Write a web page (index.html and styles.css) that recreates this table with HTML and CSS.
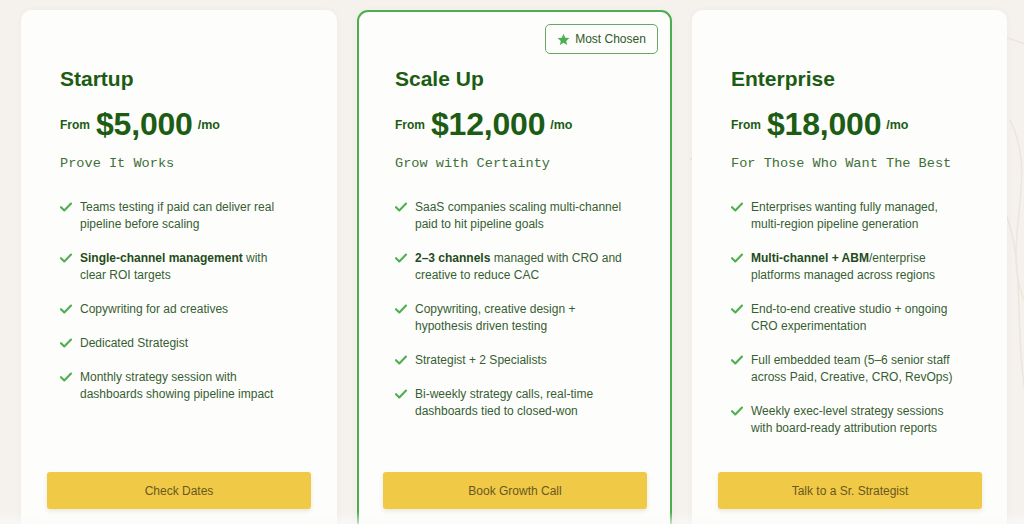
FILE: index.html
```html
<!DOCTYPE html>
<html lang="en">
<head>
<meta charset="utf-8">
<title>Pricing</title>
<link rel="stylesheet" href="styles.css">
</head>
<body>
<svg class="bg-lines" width="1024" height="524" viewBox="0 0 1024 524" aria-hidden="true">
  <path d="M690 160 C 740 120, 800 60, 880 40 S 1000 30, 1060 60" fill="none" stroke="#ece5dc" stroke-width="1.5"/>
  <path d="M1000 200 C 1030 260, 1010 330, 1030 420" fill="none" stroke="#ece5dc" stroke-width="1.5"/>
  <path d="M1010 120 C 1040 180, 1000 240, 1024 300" fill="none" stroke="#ede6dd" stroke-width="1.5"/>
</svg>
<main class="plans">
  <section class="card">
    <h2 class="plan-name">Startup</h2>
    <div class="price-row"><span class="from">From</span><span class="amount">$5,000</span><span class="per">/mo</span></div>
    <p class="tagline">Prove It Works</p>
    <ul class="features">
      <li><svg class="check" viewBox="0 0 12 10"><path d="M1 5.2 L4.3 8.4 L11 1.6"/></svg><p class="ftext">Teams testing if paid can deliver real pipeline before scaling</p></li>
      <li><svg class="check" viewBox="0 0 12 10"><path d="M1 5.2 L4.3 8.4 L11 1.6"/></svg><p class="ftext"><b>Single-channel management</b> with clear ROI targets</p></li>
      <li><svg class="check" viewBox="0 0 12 10"><path d="M1 5.2 L4.3 8.4 L11 1.6"/></svg><p class="ftext">Copywriting for ad creatives</p></li>
      <li><svg class="check" viewBox="0 0 12 10"><path d="M1 5.2 L4.3 8.4 L11 1.6"/></svg><p class="ftext">Dedicated Strategist</p></li>
      <li><svg class="check" viewBox="0 0 12 10"><path d="M1 5.2 L4.3 8.4 L11 1.6"/></svg><p class="ftext">Monthly strategy session with dashboards showing pipeline impact</p></li>
    </ul>
    <button class="cta">Check Dates</button>
  </section>
  <section class="card featured">
    <div class="badge"><svg class="star" viewBox="0 0 24 24"><path d="M12 1.5l3.1 7.2 7.8.7-5.9 5.2 1.8 7.7L12 18.2l-6.8 4.1 1.8-7.7-5.9-5.2 7.8-.7z"/></svg>Most Chosen</div>
    <h2 class="plan-name">Scale Up</h2>
    <div class="price-row"><span class="from">From</span><span class="amount">$12,000</span><span class="per">/mo</span></div>
    <p class="tagline">Grow with Certainty</p>
    <ul class="features">
      <li><svg class="check" viewBox="0 0 12 10"><path d="M1 5.2 L4.3 8.4 L11 1.6"/></svg><p class="ftext">SaaS companies scaling multi-channel paid to hit pipeline goals</p></li>
      <li><svg class="check" viewBox="0 0 12 10"><path d="M1 5.2 L4.3 8.4 L11 1.6"/></svg><p class="ftext"><b>2–3 channels</b> managed with CRO and creative to reduce CAC</p></li>
      <li><svg class="check" viewBox="0 0 12 10"><path d="M1 5.2 L4.3 8.4 L11 1.6"/></svg><p class="ftext">Copywriting, creative design + hypothesis driven testing</p></li>
      <li><svg class="check" viewBox="0 0 12 10"><path d="M1 5.2 L4.3 8.4 L11 1.6"/></svg><p class="ftext">Strategist + 2 Specialists</p></li>
      <li><svg class="check" viewBox="0 0 12 10"><path d="M1 5.2 L4.3 8.4 L11 1.6"/></svg><p class="ftext">Bi-weekly strategy calls, real-time dashboards tied to closed-won</p></li>
    </ul>
    <button class="cta">Book Growth Call</button>
  </section>
  <section class="card">
    <h2 class="plan-name">Enterprise</h2>
    <div class="price-row"><span class="from">From</span><span class="amount">$18,000</span><span class="per">/mo</span></div>
    <p class="tagline">For Those Who Want The Best</p>
    <ul class="features">
      <li><svg class="check" viewBox="0 0 12 10"><path d="M1 5.2 L4.3 8.4 L11 1.6"/></svg><p class="ftext">Enterprises wanting fully managed, multi-region pipeline generation</p></li>
      <li><svg class="check" viewBox="0 0 12 10"><path d="M1 5.2 L4.3 8.4 L11 1.6"/></svg><p class="ftext"><b>Multi-channel + ABM</b>/enterprise platforms managed across regions</p></li>
      <li><svg class="check" viewBox="0 0 12 10"><path d="M1 5.2 L4.3 8.4 L11 1.6"/></svg><p class="ftext">End-to-end creative studio + ongoing CRO experimentation</p></li>
      <li><svg class="check" viewBox="0 0 12 10"><path d="M1 5.2 L4.3 8.4 L11 1.6"/></svg><p class="ftext">Full embedded team (5–6 senior staff across Paid, Creative, CRO, RevOps)</p></li>
      <li><svg class="check" viewBox="0 0 12 10"><path d="M1 5.2 L4.3 8.4 L11 1.6"/></svg><p class="ftext">Weekly exec-level strategy sessions with board-ready attribution reports</p></li>
    </ul>
    <button class="cta">Talk to a Sr. Strategist</button>
  </section>
</main>
<div class="bottom-fade"></div>
</body>
</html>
```
FILE: styles.css
```css
* { box-sizing: border-box; }

html, body {
  margin: 0;
  height: 524px;
  overflow: hidden;
}

body {
  background: #f5f2ee;
  font-family: "Liberation Sans", Arial, sans-serif;
  position: relative;
}

.bg-lines {
  position: absolute;
  left: 0;
  top: 0;
  z-index: 0;
}

.plans {
  position: relative;
  z-index: 1;
  display: flex;
  gap: 20px;
  padding: 10px 0 0 21px;
}

.card {
  position: relative;
  width: 315px;
  height: 525px;
  flex: none;
  display: flex;
  flex-direction: column;
  background: #fdfdfb;
  border: 2px solid #fdfdfb;
  border-radius: 11px;
  padding: 55px 26px 24px 37px;
  box-shadow: 0 1px 6px rgba(120, 100, 80, 0.06);
}

.card:first-child { width: 316px; }

.card.featured {
  border: 2.5px solid #4cae4f;
  padding-left: 36px;
}

.badge {
  position: absolute;
  top: 12px;
  right: 12px;
  height: 30px;
  width: 113px;
  display: flex;
  align-items: center;
  justify-content: center;
  gap: 5px;
  border: 1px solid #6aa764;
  border-radius: 5px;
  font-size: 12px;
  color: #2d5a27;
  background: #fdfdfb;
}

.star {
  width: 13px;
  height: 13px;
  fill: #4caf50;
}

.plan-name {
  margin: 0;
  font-size: 21px;
  line-height: 24px;
  font-weight: 700;
  color: #1c5c14;
}

.price-row {
  display: flex;
  align-items: center;
  margin-top: 16px;
  height: 33px;
  color: #1c5c14;
}

.from {
  font-size: 12px;
  font-weight: 700;
  margin-right: 6px;
  margin-top: 2px;
}

.amount {
  font-size: 32px;
  font-weight: 700;
  line-height: 32px;
  letter-spacing: -0.2px;
}

.per {
  font-size: 12.5px;
  font-weight: 700;
  margin-left: 5px;
  margin-top: 2px;
}

.tagline {
  margin: 15px 0 0;
  font-family: "Liberation Mono", "DejaVu Sans Mono", monospace;
  font-size: 13.6px;
  line-height: 17px;
  color: #3f6f3a;
}

.features {
  list-style: none;
  margin: 27px 0 0;
  padding: 0 13px 0 0;
  display: flex;
  flex-direction: column;
  gap: 17px;
  flex: 1;
}

.features li {
  display: flex;
  align-items: flex-start;
  gap: 8px;
}

.ftext {
  margin: 0;
  font-size: 12px;
  line-height: 17px;
  color: #375d33;
}

.ftext b {
  color: #1f4c1b;
  font-weight: 700;
}

.check {
  flex: none;
  width: 12px;
  height: 10px;
  margin-top: 3px;
  fill: none;
  stroke: #4caf50;
  stroke-width: 2.1;
  stroke-linecap: round;
  stroke-linejoin: round;
}

.cta {
  margin: 0 0 0 -13px;
  width: 264px;
  height: 37px;
  flex: none;
  border: none;
  border-radius: 3px;
  background: #f0c947;
  color: #6a5820;
  font-family: "Liberation Sans", Arial, sans-serif;
  font-size: 12px;
  box-shadow: 0 2px 4px rgba(120, 100, 40, 0.15);
}

.featured .cta { margin-left: -12px; }

.bottom-fade {
  position: absolute;
  left: 0;
  right: 0;
  bottom: 0;
  height: 12px;
  z-index: 2;
  background: linear-gradient(to bottom, rgba(255, 255, 255, 0), rgba(250, 250, 250, 0.7));
}
```
